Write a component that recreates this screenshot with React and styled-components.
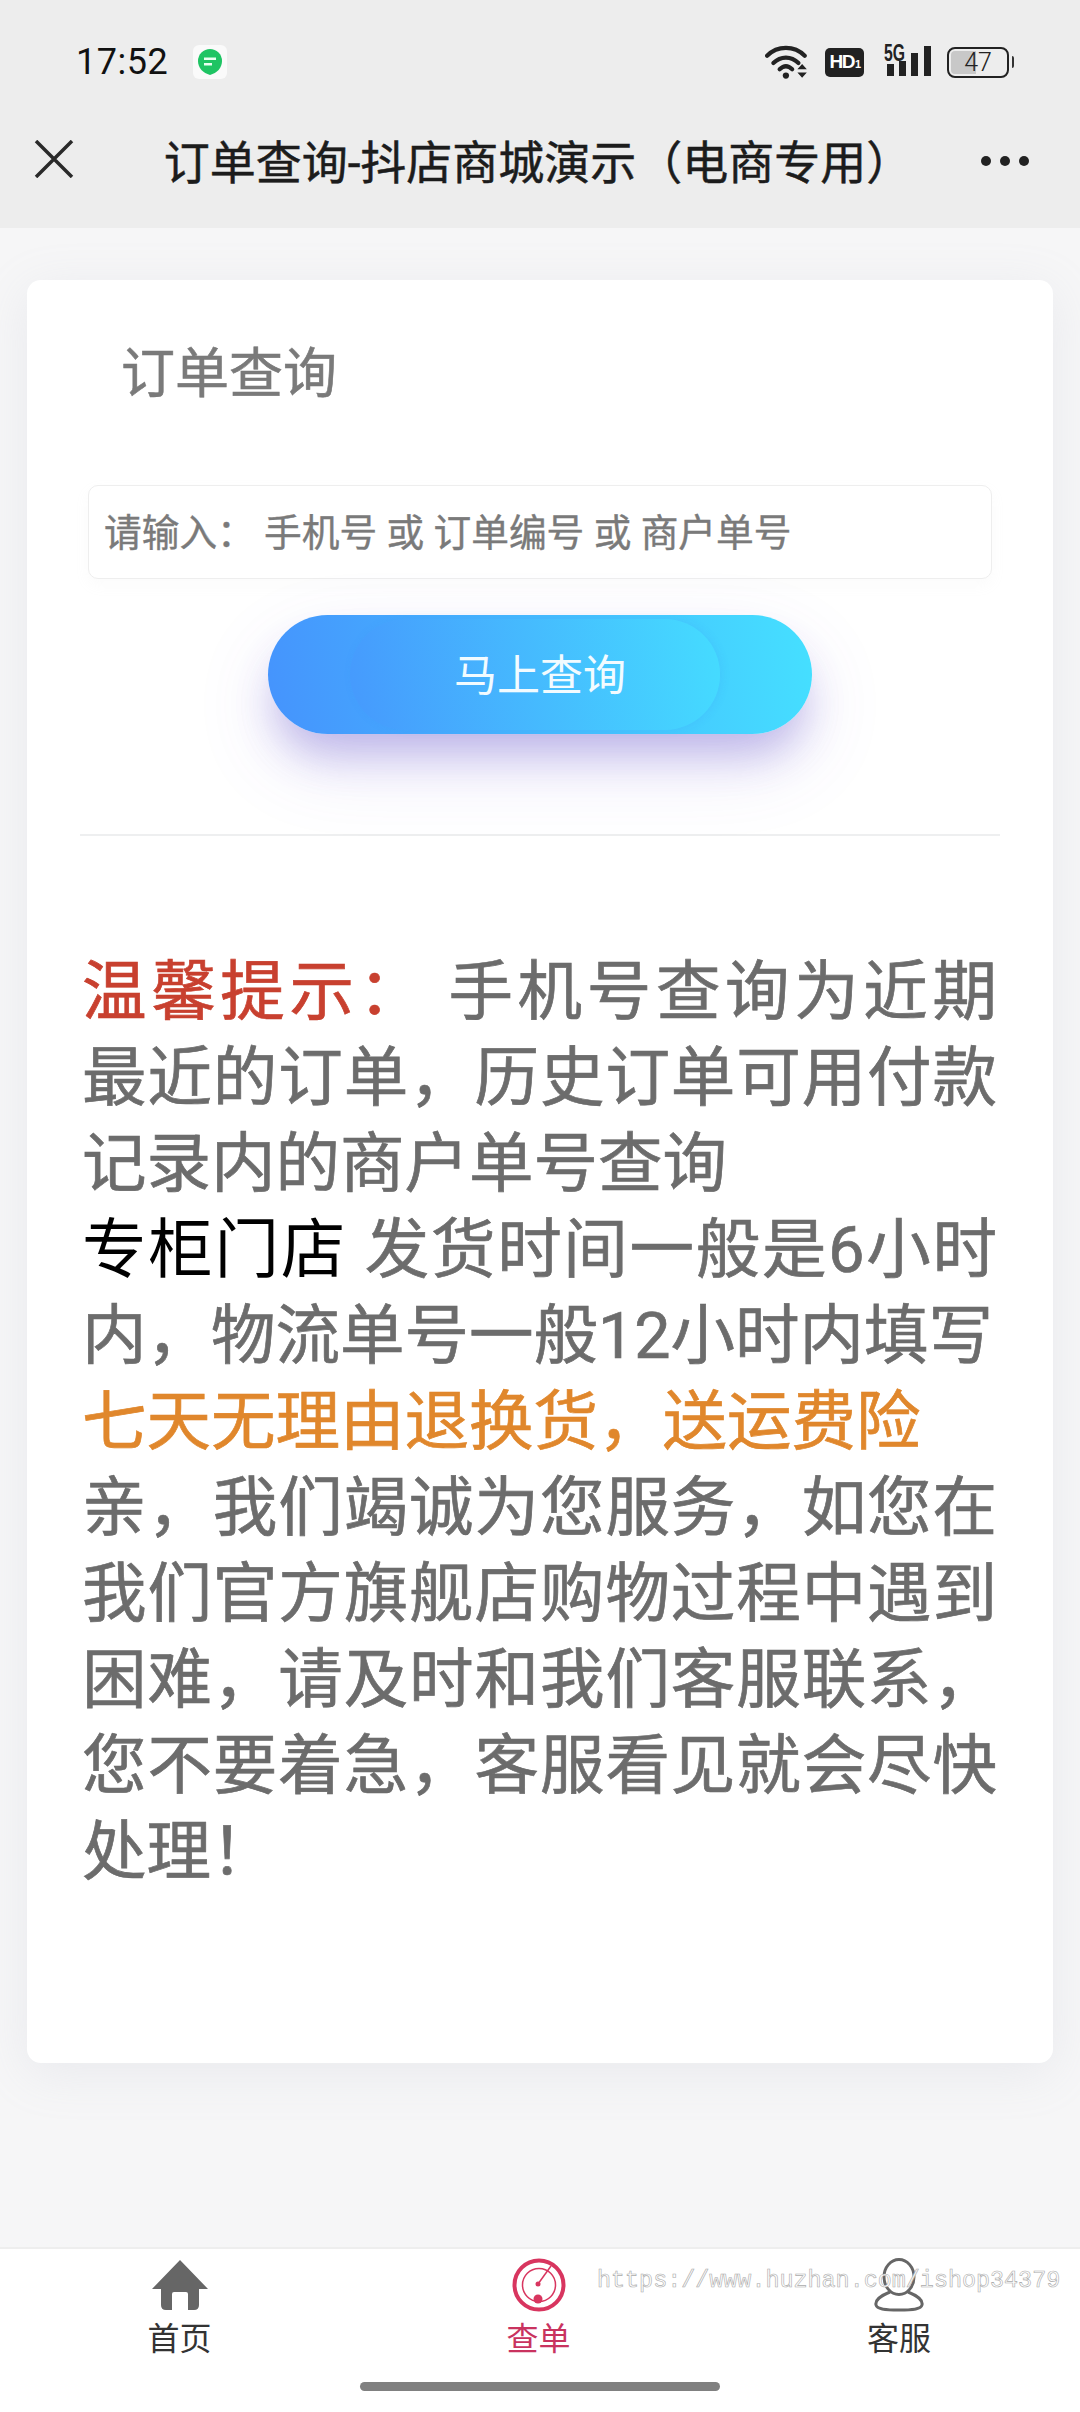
import styled, { createGlobalStyle } from "styled-components";

const GlobalStyle = createGlobalStyle`
  html, body {
    margin: 0;
    padding: 0;
    background: #f6f6f7;
  }
  * {
    box-sizing: border-box;
  }
`;

const cjk = `Roboto, "Noto Sans CJK SC", "Noto Sans", sans-serif`;

const Page = styled.div`
  position: relative;
  width: 1080px;
  height: 2412px;
  display: flex;
  flex-direction: column;
  overflow: hidden;
  font-family: ${cjk};
  background: #f6f6f7;
`;

const Header = styled.header`
  height: 228px;
  flex-shrink: 0;
  background: #ededed;
  display: flex;
  flex-direction: column;
`;

const StatusBar = styled.div`
  height: 124px;
  padding: 0 66px 0 76px;
  display: flex;
  align-items: center;
  justify-content: space-between;
`;

const StatusLeft = styled.div`
  display: flex;
  align-items: center;
  gap: 25px;
`;

const Clock = styled.span`
  font-family: Roboto, sans-serif;
  font-size: 36px;
  color: #111;
  letter-spacing: 0.5px;
`;

const AppBadge = styled.div`
  width: 34px;
  height: 34px;
  border-radius: 6px;
  background: #fafafa;
  display: flex;
  align-items: center;
  justify-content: center;
`;

const StatusRight = styled.div`
  display: flex;
  align-items: center;
  gap: 16px;
`;

const WifiIcon = styled.svg`
  margin-right: -2px;
`;

const HdBadge = styled.span`
  width: 39px;
  height: 29px;
  border-radius: 5px;
  background: #222;
  color: #fff;
  font-family: "Liberation Sans", sans-serif;
  font-weight: 700;
  font-size: 19px;
  letter-spacing: -1.5px;
  display: flex;
  align-items: center;
  justify-content: center;
  margin-right: 4px;
  sub {
    font-size: 11px;
    vertical-align: baseline;
    margin-left: 1px;
    position: relative;
    top: 2px;
  }
`;

const SignalIcon = styled.svg`
  margin-top: -6px;
`;

const Battery = styled.div`
  position: relative;
  width: 62px;
  height: 31px;
  border: 2.5px solid #222;
  border-radius: 8px;
  padding: 2px;
  margin-right: 5px;
  &::after {
    content: "";
    position: absolute;
    right: -7px;
    top: 7px;
    width: 2.5px;
    height: 12px;
    background: #333;
    border-radius: 0 2px 2px 0;
  }
`;

const BatteryFill = styled.div`
  height: 100%;
  border-radius: 4px 0 0 4px;
  background: #c8c8c8;
  display: flex;
  align-items: center;
`;

const BatteryText = styled.span`
  position: absolute;
  inset: 0;
  display: flex;
  align-items: center;
  justify-content: center;
  font-family: Roboto, sans-serif;
  font-size: 25px;
  font-weight: 300;
  color: #222;
`;

const NavBar = styled.div`
  flex: 1;
  padding: 0 50px 34px 34px;
  display: flex;
  align-items: center;
  justify-content: space-between;
`;

const NavTitle = styled.h1`
  margin: 0 0 0 22px;
  font-size: 46px;
  font-weight: 400;
  -webkit-text-stroke: 0.5px #1c1c1c;
  color: #1c1c1c;
  white-space: nowrap;
`;

const NavDots = styled.svg`
  margin-top: 4px;
`;

const Main = styled.main`
  flex: 1;
  padding: 52px 27px 0;
`;

const Card = styled.section`
  height: 1783px;
  background: #fff;
  border-radius: 14px;
  box-shadow: 0 10px 50px rgba(170, 175, 190, 0.16);
  padding: 0 53px 0;
  display: flex;
  flex-direction: column;
`;

const CardTitle = styled.h2`
  margin: 0;
  padding: 60px 0 0 41px;
  font-size: 54px;
  line-height: 70px;
  font-weight: 400;
  -webkit-text-stroke: 0.6px #7a7a7a;
  color: #7a7a7a;
`;

const SearchBox = styled.div`
  margin: 75px 8px 0;
  height: 94px;
  border: 1.5px solid #eeeeee;
  border-radius: 10px;
  box-shadow: 0 6px 14px rgba(200, 200, 200, 0.08);
  padding: 0 15px 6px;
  display: flex;
  align-items: center;
  font-size: 37.700px;
  -webkit-text-stroke: 0.4px #7a7a7a;
  color: #7a7a7a;
  white-space: pre;
`;

const ButtonRow = styled.div`
  margin-top: 36px;
  display: flex;
  justify-content: center;
`;

const QueryButton = styled.button`
  position: relative;
  width: 544px;
  height: 119px;
  border: 0;
  border-radius: 60px;
  background: linear-gradient(80deg, #4593fd 0%, #45e0ff 100%);
  box-shadow: 0 28px 40px -8px rgba(90, 70, 200, 0.32), 0 30px 80px rgba(96, 80, 205, 0.14);
  padding: 0 0 5px;
  font-family: ${cjk};
  font-size: 43px;
  color: #f2fbff;
  &::before {
    content: "";
    position: absolute;
    left: 82px;
    top: 4px;
    width: 370px;
    height: 111px;
    border-radius: 56px;
    background: linear-gradient(80deg, #4699fd 0%, #45dcff 100%);
    box-shadow: 2px 0 8px rgba(60, 130, 240, 0.12);
  }
`;

const ButtonLabel = styled.span`
  position: relative;
`;

const Divider = styled.hr`
  margin: 100px 0 0;
  border: 0;
  height: 2px;
  background: #eeeff0;
`;

const Notice = styled.div`
  margin: 113px 0 0 2px;
  width: 915px;
  font-size: 64.500px;
  line-height: 86px;
  color: #6c6c6c;
  -webkit-text-stroke: 0.7px #6c6c6c;
`;

const Line = styled.div`
  white-space: nowrap;
  text-align-last: ${(p) => (p.$full ? "justify" : "left")};
`;

const Mark = styled.span`
  color: ${(p) => p.$color};
  -webkit-text-stroke: ${(p) => (p.$plain ? "0" : `0.7px ${p.$color}`)};
`;

const TabBar = styled.nav`
  height: 165px;
  flex-shrink: 0;
  background: #fff;
  border-top: 2px solid #eeeeee;
  display: grid;
  grid-template-columns: 359px 359px 362px;
  position: relative;
`;

const Tab = styled.div`
  padding-top: 9px;
  display: flex;
  flex-direction: column;
  align-items: center;
  font-size: 32px;
  line-height: 46px;
  color: ${(p) => (p.$active ? "#c9335f" : "#333")};
`;

const IconSlot = styled.div`
  height: 54px;
  margin-bottom: 4px;
  display: flex;
  align-items: center;
`;

const HomeIndicator = styled.div`
  position: absolute;
  left: 360px;
  bottom: 21px;
  width: 360px;
  height: 9px;
  border-radius: 5px;
  background: #808080;
`;

const Watermark = styled.span`
  position: absolute;
  left: 597px;
  top: 2266px;
  font-family: "Liberation Mono", monospace;
  font-size: 23.400px;
  line-height: 30px;
  color: #fff;
  -webkit-text-stroke: 0.6px #aaa;
  white-space: nowrap;
`;

const Wifi = () => (
  <WifiIcon width="46" height="36" viewBox="0 0 44 34" fill="none">
    <path d="M2 11C12 1 28 1 38 11" stroke="#222" strokeWidth="4" strokeLinecap="round" />
    <path d="M8 18C15 11 25 11 32 18" stroke="#222" strokeWidth="4" strokeLinecap="round" />
    <path d="M14 24C18 20 22 20 26 24" stroke="#222" strokeWidth="4" strokeLinecap="round" />
    <circle cx="20" cy="30" r="3" fill="#222" />
    <path d="M31 24l4.500-5 4.500 5zM31 27l4.500 5 4.500-5z" fill="#222" />
  </WifiIcon>
);

const Signal = () => (
  <SignalIcon width="47" height="42" viewBox="0 -6 47 42">
    <text x="0" y="17" fontFamily="Liberation Sans" fontWeight="700" fontSize="23" fill="#222" textLength="21" lengthAdjust="spacingAndGlyphs">5G</text>
    <rect x="3" y="20" width="7" height="12" fill="#222" />
    <rect x="15" y="17" width="7" height="15" fill="#222" />
    <rect x="27" y="9" width="7" height="23" fill="#222" />
    <rect x="40" y="2" width="7" height="30" fill="#222" />
  </SignalIcon>
);

const HomeIcon = () => (
  <svg width="56" height="50" viewBox="0 0 56 50">
    <path d="M28 0L56 29H47V45Q47 50 42 50H36V34Q36 32 34 32H22Q20 32 20 34V50H14Q9 50 9 45V29H0Z" fill="#666" />
  </svg>
);

const RadarIcon = () => (
  <svg width="54" height="54" viewBox="0 0 54 54" fill="none" stroke="#d8355f">
    <circle cx="27" cy="27" r="24.500" strokeWidth="4" />
    <circle cx="27" cy="27" r="16.500" strokeWidth="1.500" />
    <path d="M26 26L39 8" strokeWidth="1.500" />
    <circle cx="26" cy="26" r="2.500" fill="#d8355f" stroke="none" />
    <circle cx="26" cy="41" r="4.500" fill="#d8355f" stroke="none" />
  </svg>
);

const PersonIcon = () => (
  <svg width="50" height="54" viewBox="0 0 50 54" fill="none" stroke="#666" strokeWidth="3">
    <ellipse cx="25" cy="19" rx="15" ry="17.500" />
    <path d="M16 34C6 38 1 43 2 47C3 51 10 52 25 52C40 52 47 51 48 47C49 43 44 38 34 34" />
  </svg>
);

const App = () => {
  return (
    <Page>
      <GlobalStyle />
      <Header>
        <StatusBar>
          <StatusLeft>
            <Clock>17:52</Clock>
            <AppBadge>
              <svg width="26" height="28" viewBox="0 0 26 28">
                <path d="M13 1a12 12 0 0 1 12 12c0 7-5 12-12 14C6 25 1 20 1 13A12 12 0 0 1 13 1z" fill="#1ec463" />
                <rect x="7" y="9.500" width="12" height="2.500" fill="#e8fff0" />
                <rect x="7" y="15" width="8" height="2.500" fill="#e8fff0" />
              </svg>
            </AppBadge>
          </StatusLeft>
          <StatusRight>
            <Wifi />
            <HdBadge>
              HD<sub>1</sub>
            </HdBadge>
            <Signal />
            <Battery>
              <BatteryFill style={{ width: "47%" }} />
              <BatteryText>47</BatteryText>
            </Battery>
          </StatusRight>
        </StatusBar>
        <NavBar>
          <svg width="40" height="38" viewBox="0 0 40 38" fill="none" stroke="#2a2a2a" strokeWidth="3.500">
            <path d="M2 1L38 37M38 1L2 37" />
          </svg>
          <NavTitle>订单查询-抖店商城演示（电商专用）</NavTitle>
          <NavDots width="50" height="12" viewBox="0 0 50 12" fill="#222">
            <circle cx="6" cy="6" r="5" />
            <circle cx="25" cy="6" r="5" />
            <circle cx="44" cy="6" r="5" />
          </NavDots>
        </NavBar>
      </Header>

      <Main>
        <Card>
          <CardTitle>订单查询</CardTitle>
          <SearchBox>请输入： 手机号 或 订单编号 或 商户单号</SearchBox>
          <ButtonRow>
            <QueryButton>
              <ButtonLabel>马上查询</ButtonLabel>
            </QueryButton>
          </ButtonRow>
          <Divider />
          <Notice>
            <Line $full>
              <Mark $color="#c8402f">温馨提示：</Mark> 手机号查询为近期
            </Line>
            <Line $full>最近的订单，历史订单可用付款</Line>
            <Line>记录内的商户单号查询</Line>
            <Line $full>
              <Mark $color="#000" $plain>专柜门店</Mark> 发货时间一般是6小时
            </Line>
            <Line>内，物流单号一般12小时内填写</Line>
            <Line>
              <Mark $color="#e0872c">七天无理由退换货，送运费险</Mark>
            </Line>
            <Line $full>亲，我们竭诚为您服务，如您在</Line>
            <Line $full>我们官方旗舰店购物过程中遇到</Line>
            <Line $full>困难，请及时和我们客服联系，</Line>
            <Line $full>您不要着急，客服看见就会尽快</Line>
            <Line>处理！</Line>
          </Notice>
        </Card>
      </Main>

      <TabBar>
        <Tab>
          <IconSlot>
            <HomeIcon />
          </IconSlot>
          首页
        </Tab>
        <Tab $active>
          <IconSlot>
            <RadarIcon />
          </IconSlot>
          查单
        </Tab>
        <Tab>
          <IconSlot>
            <PersonIcon />
          </IconSlot>
          客服
        </Tab>
        <HomeIndicator />
      </TabBar>
      <Watermark>https://www.huzhan.com/ishop34379</Watermark>
    </Page>
  );
};

export default App;
